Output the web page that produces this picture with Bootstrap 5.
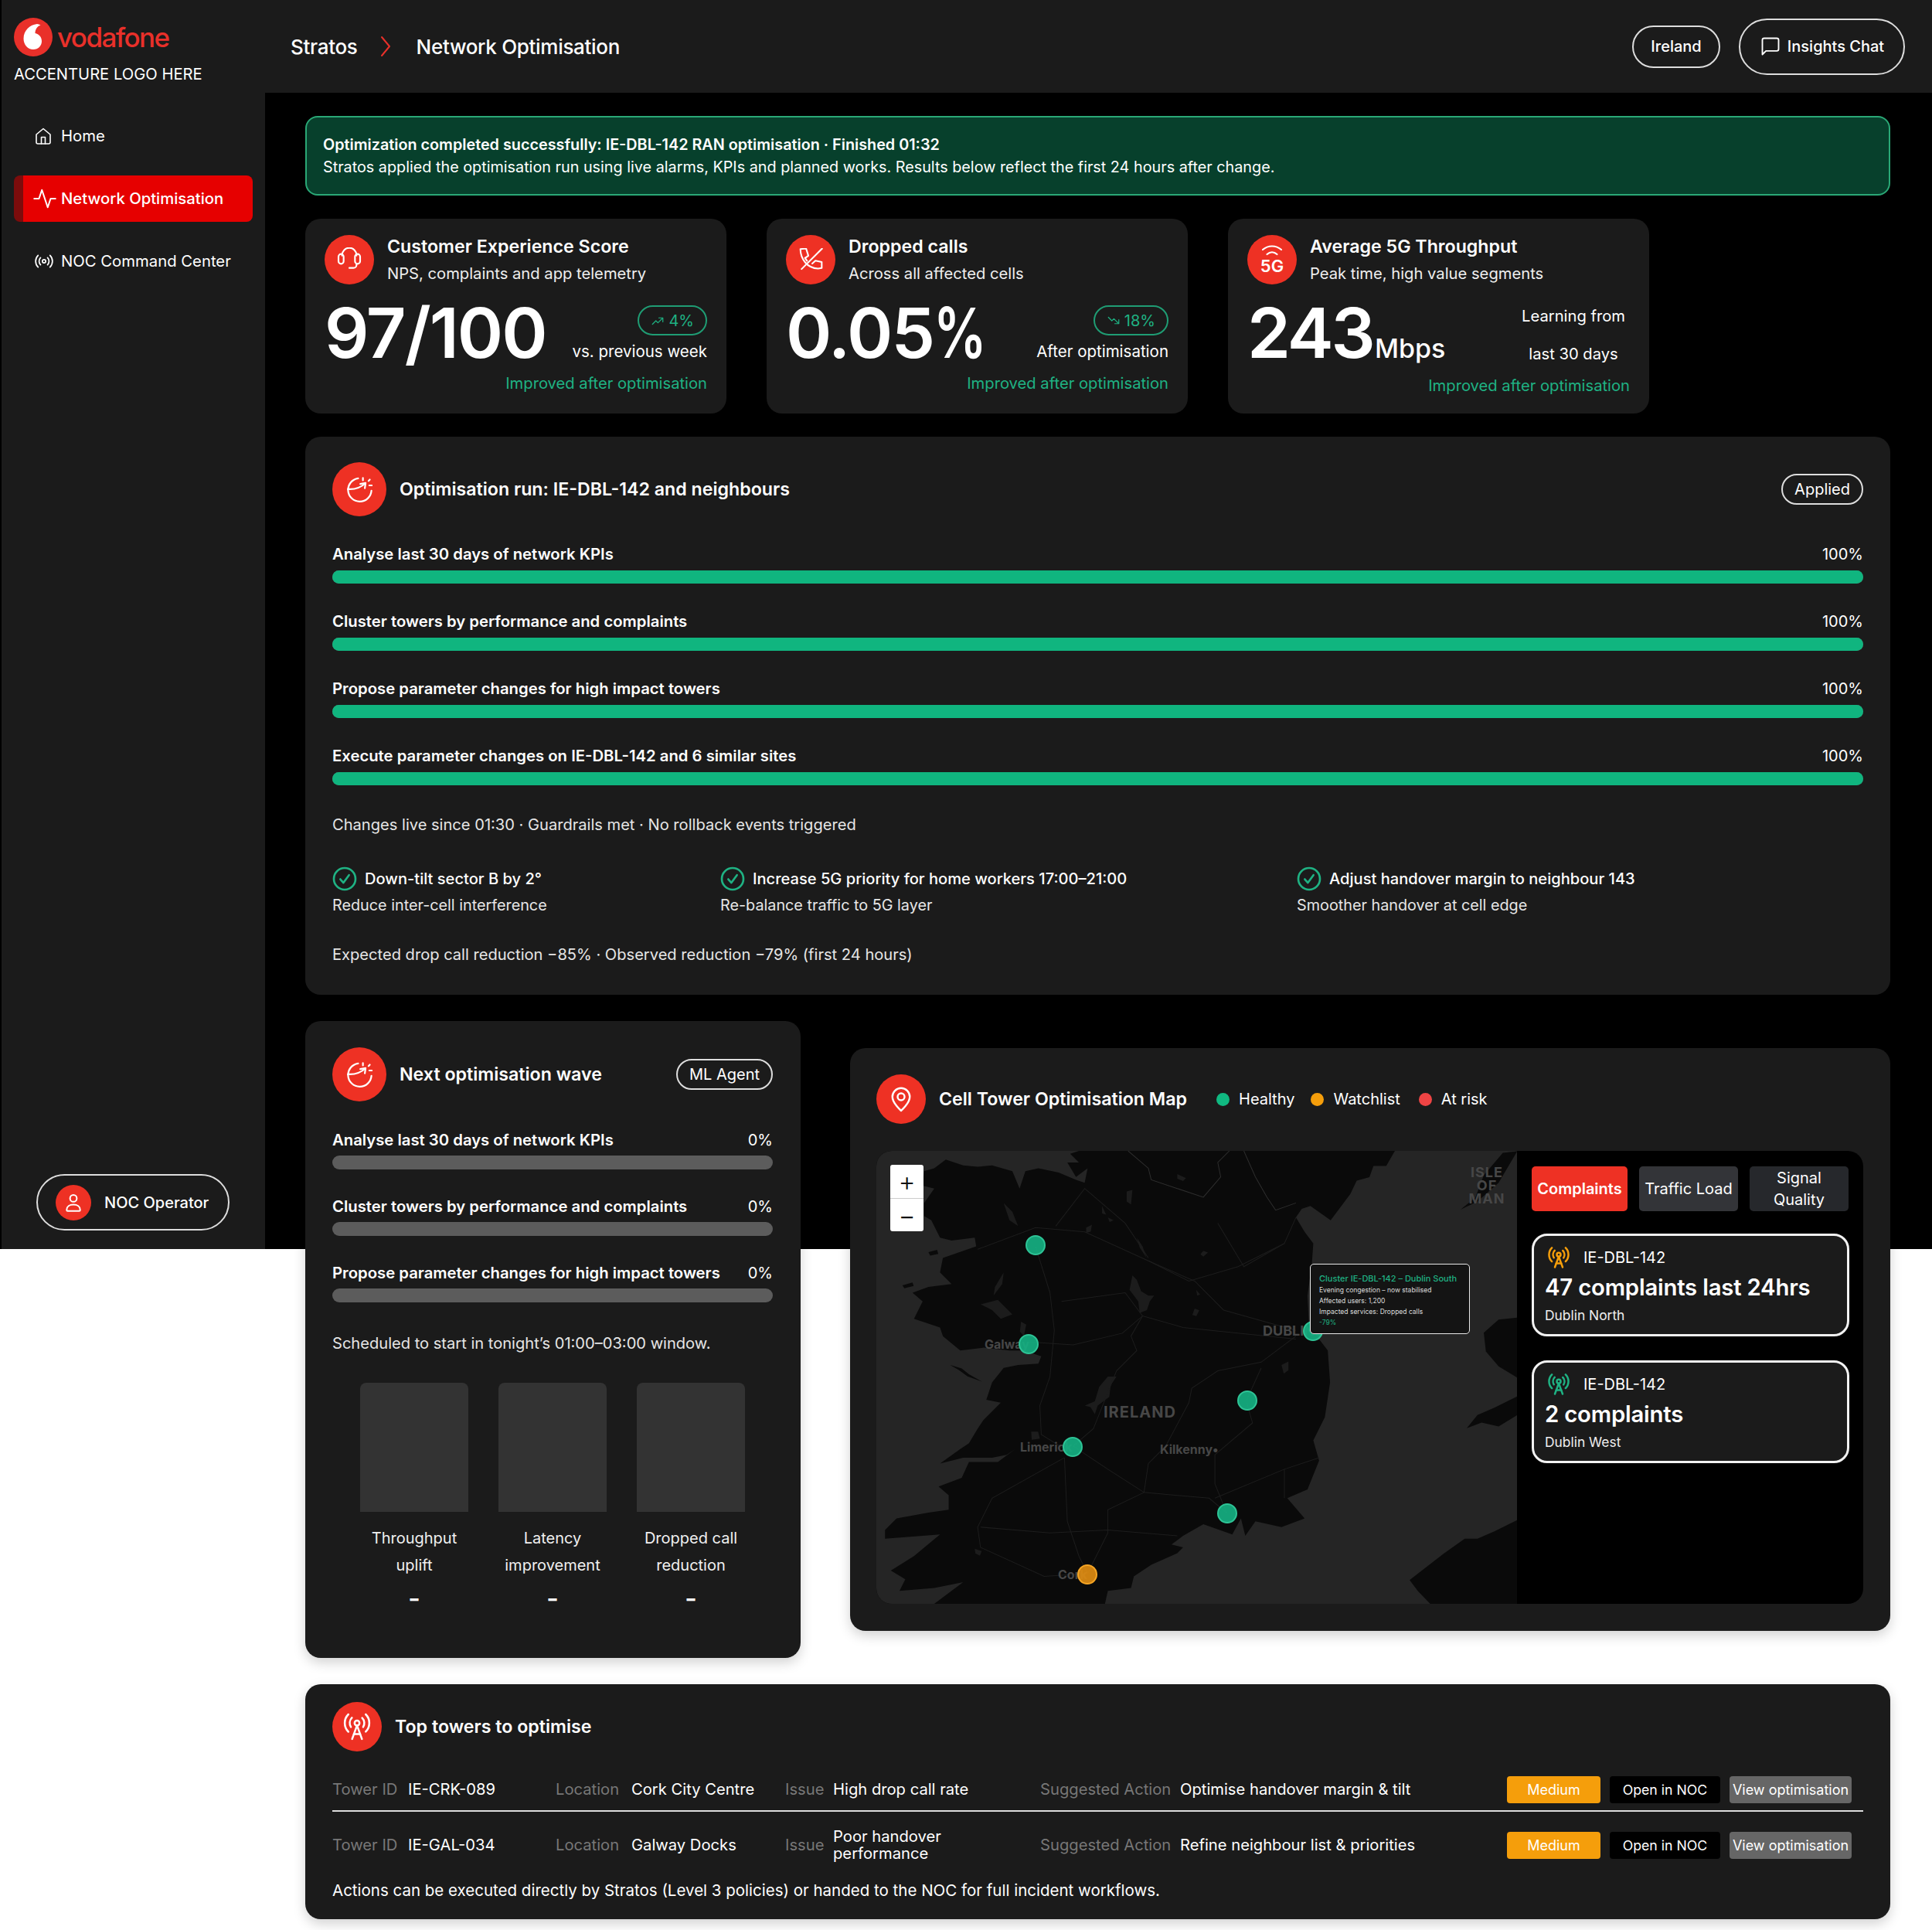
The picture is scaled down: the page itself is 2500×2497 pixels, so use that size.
<!DOCTYPE html>
<html lang="en">
<head>
<meta charset="UTF-8">
<title>Stratos - Network Optimisation</title>
<link href="https://cdn.jsdelivr.net/npm/bootstrap@5.3.0/dist/css/bootstrap.min.css" rel="stylesheet">
<style>
  body { background: #fff; font-family: Inter, "Liberation Sans", sans-serif; font-size: 20px; color: #fff; }
  svg.ico { fill: none; stroke: currentColor; stroke-width: 1.6; stroke-linecap: round; stroke-linejoin: round; flex: none; }

  /* black backdrop stops at 1616, the panels run on over the white page */
  .app-shell { min-height: 2497px; background: linear-gradient(#000 1616px, #fff 1616px); }
  .top-bar { height: 120px; background: #1b1b1b; border-left: 2px solid #000; padding: 0 35px 0 16px; }
  .brand-box { width: 358px; }
  .brand-logo { height: 50px; gap: 6px; color: #e9302a; font-size: 35px; font-weight: 500; letter-spacing: -1.6px; line-height: 1; margin-top: 23px; }
  .brand-note { font-size: 20.2px; line-height: 24px; margin-top: 11px; white-space: nowrap; }
  .crumb { font-size: 26px; font-weight: 500; letter-spacing: -.3px; }
  .crumb-sep { color: #e9302a; margin: 0 30px 0 26px; }
  .pill-btn { border: 2px solid #ddd; border-radius: 28px; color: #fff; font-size: 20px; font-weight: 500; background: transparent; }

  .side-bar { width: 343px; height: 1496px; background: #1b1b1b; border-left: 2px solid #000; flex: none; padding: 0 16px 24px; }
  .side-link { height: 60px; padding-left: 26px; gap: 11px; color: #fff; text-decoration: none; border-radius: 8px; font-size: 20.3px; }
  .side-link.is-on { background: #e60000; border-left: 12px solid #7c0c0c; padding-left: 13px; gap: 6px; font-weight: 500; }
  .op-pill { width: 250px; height: 73px; border: 2px solid #ddd; border-radius: 37px; margin-left: 29px; padding-left: 23px; gap: 17px; font-weight: 500; }
  .red-disc { background: #ee3124; border-radius: 50%; color: #fff; flex: none; }

  .main-col { padding: 30px 54px 0 52px; min-width: 0; }
  .done-note { background: #07402c; border: 2px solid #2aa876; border-radius: 16px; height: 103px; margin: 0 0 30px; padding: 21px 21px 0; line-height: 29px; color: #fff; font-size: 19.8px; }
  .done-note strong { font-weight: 600; }

  .dark-panel { background: #1b1b1b; border: 0; border-radius: 20px; color: #fff; }
  .kpi-row { gap: 52px; margin-bottom: 30px; }
  .kpi-box { width: 545px; height: 252px; padding: 21px 25px 0 25px; }
  .kpi-head { gap: 17px; }
  .kpi-title { font-size: 23.2px; font-weight: 600; line-height: 28px; margin-top: 1px; }
  .kpi-sub { line-height: 24px; margin-top: 9px; color: #eee; font-size: 20.2px; }
  .kpi-stat { height: 108px; }
  .kpi-num { font-size: 90px; font-weight: 600; line-height: 90px; letter-spacing: -2px; margin-top: 18px; white-space: nowrap; }
  .kpi-pct { display: inline-block; transform: scaleX(.76); transform-origin: left; margin-right: -18px; }
  .kpi-unit { font-size: 34px; font-weight: 500; letter-spacing: 0; margin-left: 2px; }
  .kpi-tight { letter-spacing: -3px; }
  .kpi-note { line-height: 24px; font-size: 20.5px; }
  .trend-tag { border: 2px solid #1f9d74; color: #1fb283; border-radius: 20px; height: 39px; padding: 0 15px; margin: 27px 0 9px; gap: 5px; }
  .kpi-good { color: #1fb283; text-align: right; line-height: 24px; margin-top: 8px; font-size: 20.2px; }
  .learn-note { line-height: 49px; text-align: center; padding-right: 6px; margin-top: 16px; font-size: 20.2px; }

  .run-panel { padding: 33px 35px 40px; margin-bottom: 34px; }
  .head-tag { border: 2px solid #ddd; border-radius: 20px; height: 40px; padding: 0 15px; line-height: 36px; }
  .head-title { font-size: 23.2px; font-weight: 600; }
  .step-list { margin-top: 37px; }
  .step-row { margin-bottom: 37px; }
  .step-row:last-child { margin-bottom: 0; }
  .step-head { line-height: 24px; font-weight: 600; margin-bottom: 9px; font-size: 20.3px; }
  .step-head span:last-child { font-weight: 400; font-size: 20px; }
  .step-bar { height: 17px; border-radius: 9px; background: #5c5c5c; }
  .step-bar .progress-bar { background: #10b57f; }
  .plain-line { line-height: 24px; color: #e6e6e6; font-size: 20.1px; }
  .change-grid { display: grid; grid-template-columns: 502px 746px 1fr; margin-top: 42px; }
  .change-title { font-weight: 500; gap: 10px; height: 32px; font-size: 20.1px; }
  .change-title svg { stroke-width: 2; color: #1fb283; }
  .change-sub { line-height: 24px; margin-top: 6px; color: #e6e6e6; font-size: 19.8px; }

  .pair-row { gap: 64px; margin-bottom: 34px; }
  .wave-panel { width: 641px; height: 824px; padding: 34px 36px 0 35px; box-shadow: 0 6px 16px rgba(0,0,0,.18); flex: none; }
  .wave-panel .step-list { margin-top: 38px; }
  .wave-panel .step-row { margin-bottom: 36px; }
  .wave-panel .step-row:last-child { margin-bottom: 0; }
  .wave-panel .step-bar { height: 18px; }
  .wave-panel .step-head { margin-bottom: 8px; }
  .tile-grid { display: grid; grid-template-columns: repeat(3, 140px); column-gap: 39px; justify-content: center; margin-top: 39px; }
  .tile-swatch { height: 167px; background: #333; border-radius: 8px 8px 0 0; }
  .tile-label { line-height: 34.5px; text-align: center; margin: 17px -10px 0; color: #f0f0f0; padding: 0 10px; }
  .tile-dash { font-size: 22px; font-weight: 900; line-height: 34px; text-align: center; margin-top: 9px; }

  .map-panel { flex: 1; min-width: 0; height: 754px; padding: 34px 35px 35px 34px; box-shadow: 0 6px 16px rgba(0,0,0,.18); }
  .legend-dot { width: 17px; height: 17px; border-radius: 50%; display: inline-block; margin-right: 12px; }
  .legend-item { margin-right: 21px; }
  .map-wrap { margin-top: 35px; height: 586px; border-radius: 20px; overflow: hidden; background: #000; }
  .map-canvas { width: 829px; flex: none; position: relative; background: #252525; }
  .map-canvas > svg { display: block; width: 100%; height: 100%; }
  .map-canvas path { vector-effect: non-scaling-stroke; }
  .zoom-box { position: absolute; left: 18px; top: 18px; width: 43px; background: #fff; border-radius: 3px; color: #111; }
  .zoom-box div { height: 43px; font-size: 34px; line-height: 43px; text-align: center; font-weight: 300; }
  .zoom-box div + div { border-top: 1px solid #ccc; }
  .map-pin { position: absolute; width: 26px; height: 26px; margin: -13px 0 0 -13px; border-radius: 50%; background: rgba(22,176,130,.92); border: 2px solid #2ec496; }
  .map-pin.is-watch { background: rgba(222,140,18,.92); border-color: #f5a524; }
  .map-name { position: absolute; color: #474747; font-weight: 700; font-size: 16px; line-height: 1; white-space: nowrap; transform: translateY(-50%); }
  .map-isle { left: 755px; top: 19px; width: 70px; text-align: center; font-size: 18px; line-height: 17px; transform: none; letter-spacing: 1px; }
  .map-big { font-size: 20px; letter-spacing: 1px; }
  .map-tip { position: absolute; left: 561px; top: 146px; width: 207px; height: 91px; background: #141414; border: 1px solid #e8e8e8; border-radius: 5px; padding: 10px 11px; font-size: 8.5px; line-height: 14px; color: #ddd; }
  .map-tip b { display: block; color: #1fb283; font-size: 11px; font-weight: 500; line-height: 16px; }
  .map-tip i { font-style: normal; color: #1fb283; }
  .map-side { flex: 1; padding: 20px 18px 0 19px; }
  .metric-tabs { display: grid; grid-template-columns: 124px 128px 128px; gap: 15px; }
  .metric-btn { height: 58px; padding: 0; border: 0; border-radius: 5px; color: #fff; font-size: 20px; line-height: 28px; background: #333438; }
  .metric-btn.is-on { background: #ee3124; font-weight: 600; }
  .metric-btn.is-dim { background: #26282c; }
  .spot-box { height: 133px; border: 3px solid #f2f2f2; border-radius: 20px; background: #1b1b1b; margin-top: 29px; padding: 14px 14px 0; }
  .spot-box + .spot-box { margin-top: 31px; }
  .spot-id { gap: 16px; padding-left: 2px; line-height: 26px; height: 28px; }
  .spot-id svg { stroke-width: 2; }
  .spot-num { font-size: 29.3px; font-weight: 600; line-height: 36px; margin-top: 7px; letter-spacing: -.2px; }
  .spot-area { font-size: 17.4px; line-height: 22px; margin-top: 7px; color: #eee; }

  .towers-panel { height: 304px; padding: 23px 35px 0; box-shadow: 0 6px 16px rgba(0,0,0,.18); font-size: 20.2px; }
  .tower-line { display: grid; grid-template-columns: 98px 191px 98px 199px 62px 268px 181px 423px 1fr; align-items: center; margin-top: 22px; height: 54px; }
  .tower-line + .tower-line { margin-top: 0; height: 88px; border-top: 2px solid #ddd; }
  .cell-key { color: #777; }
  .cell-wrap { line-height: 22px; padding-right: 68px; }
  .act-btn { height: 35px; padding: 0; font-size: 18px; border: 0; border-radius: 4px; color: #fff; background: #000; line-height: 35px; }
  .act-group { display: flex; gap: 12px; }
  .act-btn.is-medium { width: 121px; background: #f59e0b; }
  .act-btn.is-open { width: 143px; font-size: 17.7px; }
  .act-btn.is-view { width: 158px; background: #666; }
  .tower-foot { line-height: 24px; margin-top: 4px; font-size: 20.5px; }
</style>
</head>
<body>
<svg class="d-none">
  <symbol id="i-tower" viewBox="0 0 24 24"><path d="M4.9 16.1C1 12.2 1 5.8 4.9 1.9"/><path d="M7.8 4.7a6.14 6.14 0 0 0-.8 7.5"/><circle cx="12" cy="9" r="2"/><path d="M16.2 4.8c2 2 2.26 5.11.8 7.47"/><path d="M19.1 1.9a9.96 9.96 0 0 1 0 14.1"/><path d="M9.5 18h5"/><path d="m8 22 4-11 4 11"/></symbol>
  <symbol id="i-gauge" viewBox="0 0 24 24"><path d="M10.500 1.300A11 11 0 1 0 23 13"/><path d="M.8 11.500c4.500.3 11-.3 16.500-5.500"/><path d="M12.500 6.600l5-.9-.7 5"/><path d="M15 1v2.200"/><path d="M21.500 2.500l-1.200 1.300"/><path d="M21 8h2.300"/></symbol>
  <symbol id="i-check" viewBox="0 0 24 24"><circle cx="12" cy="12" r="10.500"/><path d="M7.800 12.400l3 3.400 5.400-7.400"/></symbol>
  <symbol id="i-up" viewBox="0 0 24 24"><path d="M3 18l6-6 3.500 3.500L20 8"/><path d="M14 7h7v7"/></symbol>
</svg>

<div class="app-shell">
  <header class="top-bar d-flex align-items-start">
    <div class="brand-box">
      <div class="brand-logo d-flex align-items-center">
        <svg width="50" height="50" viewBox="0 0 50 50"><circle cx="25" cy="25" r="25" fill="#e9302a"/><path fill="#fff" d="M30 8C21 9 12.500 16 12.500 27c0 8 5.500 14 12.500 14 6.500 0 11-4.800 11-10.500 0-6-3.800-9.500-8.500-10.500C27.500 15 30 11 34.500 9.500 33 8.500 31.500 8 30 8z"/></svg>
        <span>vodafone</span>
      </div>
      <div class="brand-note">ACCENTURE LOGO HERE</div>
    </div>
    <div class="crumb d-flex align-items-center align-self-center">
      <span>Stratos</span>
      <svg class="ico crumb-sep" width="20" height="28" viewBox="0 0 20 28" style="stroke-width:2"><path d="M5 2l10 12L5 26"/></svg>
      <span>Network Optimisation</span>
    </div>
    <div class="ms-auto d-flex align-items-center align-self-center gap-4">
      <button type="button" class="btn pill-btn" style="width:114px;height:55px;padding:0">Ireland</button>
      <button type="button" class="btn pill-btn d-flex align-items-center justify-content-center gap-2" style="width:215px;height:73px;border-radius:37px;padding:0">
        <svg class="ico" width="28" height="28" viewBox="0 0 24 24"><path d="M21 15a2 2 0 0 1-2 2H7l-4 4V5a2 2 0 0 1 2-2h14a2 2 0 0 1 2 2z"/></svg>
        Insights Chat
      </button>
    </div>
  </header>

  <div class="d-flex align-items-start">
    <aside class="side-bar d-flex flex-column">
      <nav class="d-flex flex-column" style="gap:21px;margin-top:26px">
        <a class="side-link d-flex align-items-center" href="#"><svg class="ico" width="24" height="24" viewBox="0 0 24 24"><path d="m3 10 9-7.500 9 7.500v10a2 2 0 0 1-2 2H5a2 2 0 0 1-2-2z"/><path d="M9.500 22v-8.500h5V22"/></svg>Home</a>
        <a class="side-link is-on d-flex align-items-center" href="#"><svg class="ico" width="30" height="30" viewBox="0 0 24 24"><polyline points="23 12 18 12 15 21 9 3 6 12 1 12"/></svg>Network Optimisation</a>
        <a class="side-link d-flex align-items-center" style="gap:9px" href="#"><svg class="ico" width="26" height="26" viewBox="0 0 24 24"><path d="M4.900 19.100C1 15.200 1 8.800 4.900 4.900"/><path d="M7.800 16.200c-2.300-2.300-2.300-6.100 0-8.500"/><circle cx="12" cy="12" r="2"/><path d="M16.200 7.800c2.300 2.300 2.300 6.100 0 8.500"/><path d="M19.100 4.900C23 8.800 23 15.100 19.100 19"/></svg>NOC Command Center</a>
      </nav>
      <div class="op-pill d-flex align-items-center mt-auto">
        <span class="red-disc d-flex align-items-center justify-content-center" style="width:46px;height:46px">
          <svg class="ico" width="30" height="30" viewBox="0 0 24 24"><circle cx="12" cy="7.500" r="3.500"/><path d="M5 19.500c0-3.500 3-5.500 7-5.500s7 2 7 5.500a1 1 0 0 1-1 1H6a1 1 0 0 1-1-1z"/></svg>
        </span>
        NOC Operator
      </div>
    </aside>

    <main class="main-col flex-grow-1">
      <div class="alert done-note" role="alert">
        <strong>Optimization completed successfully: IE-DBL-142 RAN optimisation · Finished 01:32</strong><br>
        Stratos applied the optimisation run using live alarms, KPIs and planned works. Results below reflect the first 24 hours after change.
      </div>

      <section class="kpi-row d-flex">
        <div class="card dark-panel kpi-box">
          <div class="kpi-head d-flex">
            <span class="red-disc d-flex align-items-center justify-content-center" style="width:64px;height:64px">
              <svg class="ico" width="32" height="32" viewBox="0 0 24 24"><path d="M5 8V7.500a7 7 0 0 1 14 0V8"/><rect x="1.500" y="6.500" width="5" height="9.500" rx="2.500"/><rect x="17.500" y="6.500" width="5" height="9.500" rx="2.500"/><path d="M19 16v1a3 3 0 0 1-3 3h-4"/></svg>
            </span>
            <div><div class="kpi-title">Customer Experience Score</div><div class="kpi-sub">NPS, complaints and app telemetry</div></div>
          </div>
          <div class="kpi-stat d-flex justify-content-between">
            <div class="kpi-num">97/100</div>
            <div class="text-end d-flex flex-column align-items-end">
              <span class="trend-tag d-inline-flex align-items-center"><svg class="ico" width="18" height="18" viewBox="0 0 24 24"><use href="#i-up"/></svg>4%</span>
              <span class="kpi-note">vs. previous week</span>
            </div>
          </div>
          <div class="kpi-good">Improved after optimisation</div>
        </div>

        <div class="card dark-panel kpi-box">
          <div class="kpi-head d-flex">
            <span class="red-disc d-flex align-items-center justify-content-center" style="width:64px;height:64px">
              <svg class="ico" width="31" height="31" viewBox="0 0 24 24"><path d="M6 10 9.300 7.600 7 .3 1.300 1C1.500 11 8 20 19 20.500l3.700-.5v-6L16.400 12.600 13.200 15.500"/><path d="M6 10l2 2.800"/><path d="M23 .5 2.500 21"/></svg>
            </span>
            <div><div class="kpi-title">Dropped calls</div><div class="kpi-sub">Across all affected cells</div></div>
          </div>
          <div class="kpi-stat d-flex justify-content-between">
            <div class="kpi-num">0.05<span class="kpi-pct">%</span></div>
            <div class="text-end d-flex flex-column align-items-end">
              <span class="trend-tag d-inline-flex align-items-center"><svg class="ico" width="18" height="18" style="transform:scaleY(-1)" viewBox="0 0 24 24"><use href="#i-up"/></svg>18%</span>
              <span class="kpi-note">After optimisation</span>
            </div>
          </div>
          <div class="kpi-good">Improved after optimisation</div>
        </div>

        <div class="card dark-panel kpi-box">
          <div class="kpi-head d-flex">
            <span class="red-disc d-flex flex-column align-items-center justify-content-center" style="width:64px;height:64px">
              <svg class="ico" width="28" height="14" viewBox="0 0 28 14" style="stroke-width:2.200"><path d="M2 6c7-6 17-6 24 0"/><path d="M7.500 12c4-3.500 9-3.500 13 0"/></svg>
              <span style="font-size:22px;font-weight:600;line-height:22px;margin-top:2px">5G</span>
            </span>
            <div><div class="kpi-title">Average 5G Throughput</div><div class="kpi-sub">Peak time, high value segments</div></div>
          </div>
          <div class="kpi-stat d-flex justify-content-between">
            <div class="kpi-num kpi-tight">243<span class="kpi-unit">Mbps</span></div>
            <div class="learn-note">Learning from<br>last 30 days</div>
          </div>
          <div class="kpi-good" style="margin-top:11px">Improved after optimisation</div>
        </div>
      </section>

      <section class="card dark-panel run-panel">
        <div class="d-flex align-items-center">
          <span class="red-disc d-flex align-items-center justify-content-center" style="width:70px;height:70px"><svg class="ico" width="33" height="33" viewBox="0 0 24 24"><use href="#i-gauge"/></svg></span>
          <span class="head-title" style="margin-left:17px">Optimisation run: IE-DBL-142 and neighbours</span>
          <span class="head-tag ms-auto">Applied</span>
        </div>
        <div class="step-list">
          <div class="step-row">
            <div class="step-head d-flex justify-content-between"><span>Analyse last 30 days of network KPIs</span><span>100%</span></div>
            <div class="progress step-bar"><div class="progress-bar" style="width:100%"></div></div>
          </div>
          <div class="step-row">
            <div class="step-head d-flex justify-content-between"><span>Cluster towers by performance and complaints</span><span>100%</span></div>
            <div class="progress step-bar"><div class="progress-bar" style="width:100%"></div></div>
          </div>
          <div class="step-row">
            <div class="step-head d-flex justify-content-between"><span>Propose parameter changes for high impact towers</span><span>100%</span></div>
            <div class="progress step-bar"><div class="progress-bar" style="width:100%"></div></div>
          </div>
          <div class="step-row">
            <div class="step-head d-flex justify-content-between"><span>Execute parameter changes on IE-DBL-142 and 6 similar sites</span><span>100%</span></div>
            <div class="progress step-bar"><div class="progress-bar" style="width:100%"></div></div>
          </div>
        </div>
        <div class="plain-line" style="margin-top:39px">Changes live since 01:30 · Guardrails met · No rollback events triggered</div>
        <div class="change-grid">
          <div>
            <div class="change-title d-flex align-items-center"><svg class="ico" width="32" height="32" viewBox="0 0 24 24"><use href="#i-check"/></svg>Down-tilt sector B by 2°</div>
            <div class="change-sub">Reduce inter-cell interference</div>
          </div>
          <div>
            <div class="change-title d-flex align-items-center"><svg class="ico" width="32" height="32" viewBox="0 0 24 24"><use href="#i-check"/></svg>Increase 5G priority for home workers 17:00–21:00</div>
            <div class="change-sub">Re-balance traffic to 5G layer</div>
          </div>
          <div>
            <div class="change-title d-flex align-items-center"><svg class="ico" width="32" height="32" viewBox="0 0 24 24"><use href="#i-check"/></svg>Adjust handover margin to neighbour 143</div>
            <div class="change-sub">Smoother handover at cell edge</div>
          </div>
        </div>
        <div class="plain-line" style="margin-top:40px">Expected drop call reduction −85% · Observed reduction −79% (first 24 hours)</div>
      </section>

      <div class="pair-row d-flex align-items-center">
        <section class="card dark-panel wave-panel">
          <div class="d-flex align-items-center">
            <span class="red-disc d-flex align-items-center justify-content-center" style="width:70px;height:70px"><svg class="ico" width="33" height="33" viewBox="0 0 24 24"><use href="#i-gauge"/></svg></span>
            <span class="head-title" style="margin-left:17px">Next optimisation wave</span>
            <span class="head-tag ms-auto">ML Agent</span>
          </div>
          <div class="step-list">
            <div class="step-row">
              <div class="step-head d-flex justify-content-between"><span>Analyse last 30 days of network KPIs</span><span>0%</span></div>
              <div class="progress step-bar"><div class="progress-bar" style="width:0%"></div></div>
            </div>
            <div class="step-row">
              <div class="step-head d-flex justify-content-between"><span>Cluster towers by performance and complaints</span><span>0%</span></div>
              <div class="progress step-bar"><div class="progress-bar" style="width:0%"></div></div>
            </div>
            <div class="step-row">
              <div class="step-head d-flex justify-content-between"><span>Propose parameter changes for high impact towers</span><span>0%</span></div>
              <div class="progress step-bar"><div class="progress-bar" style="width:0%"></div></div>
            </div>
          </div>
          <div class="plain-line" style="margin-top:41px">Scheduled to start in tonight’s 01:00–03:00 window.</div>
          <div class="tile-grid">
            <div><div class="tile-swatch"></div><div class="tile-label">Throughput uplift</div><div class="tile-dash">–</div></div>
            <div><div class="tile-swatch"></div><div class="tile-label">Latency improvement</div><div class="tile-dash">–</div></div>
            <div><div class="tile-swatch"></div><div class="tile-label">Dropped call reduction</div><div class="tile-dash">–</div></div>
          </div>
        </section>

        <section class="card dark-panel map-panel">
          <div class="d-flex align-items-center">
            <span class="red-disc d-flex align-items-center justify-content-center" style="width:64px;height:64px"><svg class="ico" width="36" height="36" viewBox="0 0 24 24"><path d="M19.500 10c0 5.500-7.500 12-7.500 12S4.500 15.500 4.500 10a7.500 7.500 0 0 1 15 0z"/><circle cx="12" cy="10" r="3"/></svg></span>
            <span class="head-title" style="margin-left:17px;margin-right:38px">Cell Tower Optimisation Map</span>
            <span class="d-inline-flex align-items-center legend-item"><span class="legend-dot" style="background:#10b981"></span>Healthy</span>
            <span class="d-inline-flex align-items-center me-4"><span class="legend-dot" style="background:#f59e0b"></span>Watchlist</span>
            <span class="d-inline-flex align-items-center"><span class="legend-dot" style="background:#ef4444"></span>At risk</span>
          </div>
          <div class="map-wrap d-flex">
            <div class="map-canvas">
              <svg viewBox="0 0 2214 1565" preserveAspectRatio="none">
                <g fill="#0a0a0a">
                  <path d="M700 0L670 10 700 40 660 40 690 90 730 60 720 110 690 100 630 75 560 60 515 70 495 130 470 70 400 50 350 55 300 50 240 30 200 60 165 70 160 120 200 130 165 180 165 225 190 240 220 300 260 310 340 300 345 330 230 370 220 420 260 460 180 470 125 490 160 520 130 580 220 610 230 640 290 690 370 680 460 690 510 690 570 710 560 735 490 740 440 750 400 800 380 860 430 870 370 930 350 960 320 1010 290 1030 220 1080 300 1060 400 1060 450 1050 480 1030 420 1075 320 1075 295 1130 215 1160 250 1190 250 1240 180 1250 70 1270 30 1310 30 1340 220 1325 130 1400 50 1450 100 1480 80 1520 200 1510 300 1490 200 1565 790 1565 800 1520 880 1510 890 1470 950 1430 1040 1390 1060 1370 1020 1360 1060 1330 1130 1290 1230 1325 1260 1270 1275 1330 1310 1280 1400 1300 1480 1270 1420 1200 1490 1170 1530 1070 1510 1000 1550 920 1568 800 1560 690 1530 650 1495 600 1490 500 1505 390 1510 320 1480 280 1450 230 1470 200 1500 190 1570 240 1638 149 1660 103 1704 91 1718 52 1762 52 1792 0Z"/>
                  <path d="M180 350l30-8 4 14-28 6zM90 465l35-10 4 12-32 8zM255 740l40 12 25 20 45 25-50-18-30-22z"/>
                  <g transform="translate(-91 -395) scale(1.465 1.295)">
                    <path d="M1440 462L1475 430 1495 370 1540 310 1574 306 1530 390 1480 440Z"/>
                    <path d="M1495 790L1530 755 1574 750 1574 910 1530 880 1500 840Z"/>
                    <path d="M1574 960L1520 990 1480 1010 1455 1045 1490 1030 1530 1040 1574 1010Z"/>
                    <path d="M1320 1450L1400 1380 1450 1340 1480 1340 1520 1320 1574 1290 1574 1515 1370 1515 1340 1480Z"/>
                  </g>
                </g>
                <g fill="#1c1c1c">
                  <path d="M440 180l30 30 20 50-30-20zM440 420l-30 50-5 30 30-40zM360 530l60-15 50 50-40 15-30-30zM500 590l18 10-8 40-14-16zM885 430l-10 50 30 40 5 40 25-10 10-30 15-20-20 0-25-15-15-40zM800 780l30 0-20 30-5 40-40 30-10 30-15-25-20-5 35-15 15-50zM865 140l20-5-5 50-15-10zM780 190l14 30-14-4zM800 230l20 10-14 6zM725 265l20-10-4 24-16 4zM1040 80l30 14-10 10-20-8zM1130 345l16 6-16 14-10-8zM1105 480l14 16-10 4zM1100 545l16 6-10 20-14-4zM1400 740l24-12 0 30-16 12zM535 970l24 0 6 24-28 4zM340 1375l24 8-6 16-16-8zM900 300l20 30 14 40-24-36z"/>
                </g>
                <g fill="none" stroke="#1d1d1d" stroke-width="1">
                  <path d="M350 340L550 265 720 280 940 380 1100 450 1200 550 1450 620"/>
                  <path d="M620 260L720 130 860 250 940 370"/>
                  <path d="M550 330L600 490 615 620 600 780 565 880 570 980 650 1030"/>
                  <path d="M530 660L680 670 850 630 920 570 1060 610 1450 650"/>
                  <path d="M680 1020L750 960 830 760 900 690 880 640 920 570"/>
                  <path d="M680 1020L800 1100 925 1180 1150 1200 1210 1250"/>
                  <path d="M925 1180L940 1080 1000 1020 1080 870 1090 820 1180 760 1330 730 1450 640"/>
                  <path d="M1280 860L1330 750"/>
                  <path d="M1280 870L1300 940 1170 1050 1170 1150 1210 1250"/>
                  <path d="M650 1060L660 1280 700 1400 730 1460"/>
                  <path d="M730 1460L800 1320 800 1240 925 1180"/>
                  <path d="M650 1060L400 1200 350 1300 360 1370 580 1470 730 1460"/>
                  <path d="M360 1300L600 1320 800 1310 1040 1330"/>
                  <path d="M1170 1200L1410 1100 1530 1060"/>
                  <path d="M1410 1100L1410 1200"/>
                  <path d="M940 380L1080 450 1250 400 1410 320 1450 230"/>
                  <path d="M640 520L860 490 920 570"/>
                  <path d="M1180 250L1270 400 1410 320"/>
                  <path stroke="#2e2e2e" d="M870 0L940 60 950 100 1040 130 1130 160 1190 90 1180 40 1220 0"/>
                  <path stroke="#2e2e2e" d="M1270 0L1310 90 1350 160 1380 205 1450 180"/>
                </g>
              </svg>
              <div class="zoom-box"><div>+</div><div>−</div></div>
              <span class="map-name map-isle">ISLE<br>OF<br>MAN</span>
              <span class="map-name map-big" style="left:294px;top:338px">IRELAND</span>
              <span class="map-name" style="left:500px;top:233px;font-size:18px">DUBLIN</span>
              <span class="map-name" style="left:140px;top:250px">Galway</span>
              <span class="map-name" style="left:186px;top:383px">Limerick</span>
              <span class="map-name" style="left:367px;top:386px">Kilkenny•</span>
              <span class="map-name" style="left:235px;top:548px">Cork</span>
              <span class="map-pin" style="left:206px;top:122px"></span>
              <span class="map-pin" style="left:197px;top:250px"></span>
              <span class="map-pin" style="left:565px;top:233px"></span>
              <span class="map-pin" style="left:480px;top:323px"></span>
              <span class="map-pin" style="left:254px;top:383px"></span>
              <span class="map-pin" style="left:454px;top:469px"></span>
              <span class="map-pin is-watch" style="left:273px;top:548px"></span>
              <div class="map-tip">
                <b>Cluster IE-DBL-142 – Dublin South</b>
                Evening congestion – now stabilised<br>
                Affected users: 1,200<br>
                Impacted services: Dropped calls<br>
                <i>-79%</i>
              </div>
            </div>
            <div class="map-side">
              <div class="metric-tabs">
                <button type="button" class="btn metric-btn is-on">Complaints</button>
                <button type="button" class="btn metric-btn">Traffic Load</button>
                <button type="button" class="btn metric-btn is-dim">Signal Quality</button>
              </div>
              <div class="spot-box">
                <div class="spot-id d-flex align-items-center"><svg class="ico" width="32" height="30" style="color:#f59e0b" viewBox="0 0 24 24"><use href="#i-tower"/></svg>IE-DBL-142</div>
                <div class="spot-num">47 complaints last 24hrs</div>
                <div class="spot-area">Dublin North</div>
              </div>
              <div class="spot-box">
                <div class="spot-id d-flex align-items-center"><svg class="ico" width="32" height="30" style="color:#1fb283" viewBox="0 0 24 24"><use href="#i-tower"/></svg>IE-DBL-142</div>
                <div class="spot-num">2 complaints</div>
                <div class="spot-area">Dublin West</div>
              </div>
            </div>
          </div>
        </section>
      </div>

      <section class="card dark-panel towers-panel">
        <div class="d-flex align-items-center">
          <span class="red-disc d-flex align-items-center justify-content-center" style="width:64px;height:64px"><svg class="ico" width="38" height="38" viewBox="0 0 24 24"><use href="#i-tower"/></svg></span>
          <span class="head-title" style="margin-left:17px">Top towers to optimise</span>
        </div>
        <div class="tower-line">
          <span class="cell-key">Tower ID</span><span>IE-CRK-089</span>
          <span class="cell-key">Location</span><span>Cork City Centre</span>
          <span class="cell-key">Issue</span><span class="cell-wrap">High drop call rate</span>
          <span class="cell-key">Suggested Action</span><span>Optimise handover margin &amp; tilt</span>
          <div class="act-group"><button type="button" class="btn act-btn is-medium">Medium</button><button type="button" class="btn act-btn is-open">Open in NOC</button><button type="button" class="btn act-btn is-view">View optimisation</button></div>
        </div>
        <div class="tower-line">
          <span class="cell-key">Tower ID</span><span>IE-GAL-034</span>
          <span class="cell-key">Location</span><span>Galway Docks</span>
          <span class="cell-key">Issue</span><span class="cell-wrap">Poor handover performance</span>
          <span class="cell-key">Suggested Action</span><span>Refine neighbour list &amp; priorities</span>
          <div class="act-group"><button type="button" class="btn act-btn is-medium">Medium</button><button type="button" class="btn act-btn is-open">Open in NOC</button><button type="button" class="btn act-btn is-view">View optimisation</button></div>
        </div>
        <div class="tower-foot">Actions can be executed directly by Stratos (Level 3 policies) or handed to the NOC for full incident workflows.</div>
      </section>
    </main>
  </div>
</div>
</body>
</html>
